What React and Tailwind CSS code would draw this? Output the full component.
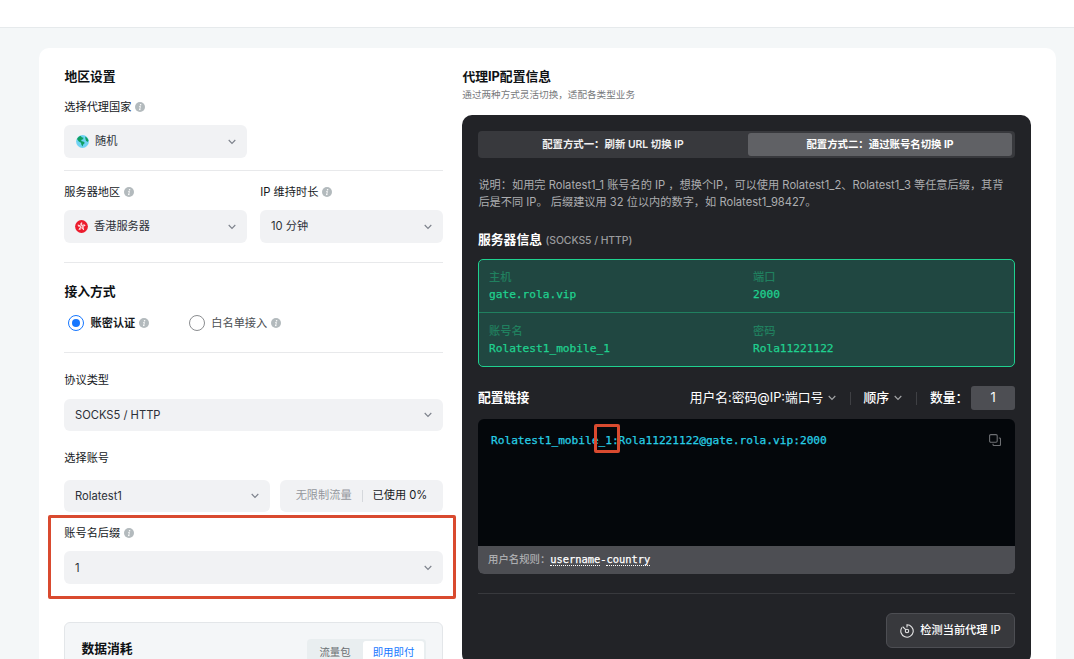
const MONO = "font-['DejaVu_Sans_Mono','Noto_Sans_CJK_SC',monospace] tracking-[-0.02px] [-webkit-text-stroke:0.25px_currentColor]";

function Info() {
  return (
    <svg viewBox="0 0 10 10" className="w-[10px] h-[10px] shrink-0">
      <circle cx="5" cy="5" r="5" fill="#b3babd" />
      <circle cx="5.6" cy="2.7" r="0.8" fill="#fff" />
      <path d="M4.2 4.4h1.2L4.7 7.6M4 7.6h1.5" stroke="#fff" strokeWidth="0.9" fill="none" />
    </svg>
  );
}

function Chevron({ className = "text-[#7d828b]" }) {
  return (
    <svg viewBox="0 0 8 6" className={`w-2 h-[6px] shrink-0 ${className}`} fill="none" stroke="currentColor" strokeWidth="1.1">
      <path d="M0.7 1L4 4.4L7.3 1" />
    </svg>
  );
}

function Globe() {
  return (
    <svg viewBox="0 0 13 13" className="w-[13px] h-[13px] shrink-0 ml-px">
      <circle cx="6.5" cy="6.5" r="6.4" fill="#6fd3f3" />
      <path d="M1 4C1.8 2.2 3 1.2 4.8 0.9L6 2.6L7.4 2.6L7.2 4.2L5.6 4.8L5.2 6L7.8 6.8L8.8 8L7.2 9.4L6.6 11.6L5.4 9.8L5 7.8L2.8 6.6Z" fill="#0f9f61" />
      <path d="M9.2 1.4C10.9 2.2 12 3.6 12.4 5.4L11.6 7L10 5.8L9.4 3.8Z" fill="#0f9f61" />
    </svg>
  );
}

function HongKong() {
  return (
    <svg viewBox="0 0 13 13" className="w-[13px] h-[13px] shrink-0">
      <circle cx="6.5" cy="6.5" r="6.4" fill="#ec1c2d" />
      {[0, 72, 144, 216, 288].map((angle) => (
        <g key={angle} transform={`rotate(${angle} 6.5 6.5)`}>
          <path d="M6.5 6.2C4.7 5.2 5 2.7 7.2 2.3C6.8 3.5 7.9 4.4 6.5 6.2Z" fill="#fff" />
          <path d="M6.3 5.4C5.9 4.6 6 4 6.4 3.5" stroke="#ec1c2d" strokeWidth="0.4" fill="none" />
        </g>
      ))}
    </svg>
  );
}

function Heading({ children, className = "" }) {
  return <h2 className={`h-5 leading-[22px] pl-[0.4px] text-[12.8px] font-bold text-[#0e1114] ${className}`}>{children}</h2>;
}

function Label({ children, info }) {
  return (
    <div className="flex items-center h-5 gap-1 pl-[0.3px] text-[11.2px] text-[#16191d] whitespace-nowrap">
      <span>{children}</span>
      {info && <Info />}
    </div>
  );
}

function Select({ children, icon, className = "h-[33px]" }) {
  return (
    <div className={`flex items-center rounded-md bg-[#f1f2f4] pl-[11px] pr-[11px] text-[11.2px] text-[#2c3038] ${className}`}>
      {icon}
      <span className={icon ? "ml-[6px]" : ""}>{children}</span>
      <span className="ml-auto flex">
        <Chevron />
      </span>
    </div>
  );
}

function Cell({ label, value }) {
  return (
    <div className="w-[264px] shrink-0 pt-[9px] text-[11.2px] leading-[17px]">
      <div className="text-[#20805f] font-medium">{label}</div>
      <div className={`text-[#1fd18f] ${MONO}`}>{value}</div>
    </div>
  );
}

function Settings() {
  return (
    <div className="w-[379px] shrink-0">
      <Heading>地区设置</Heading>
      <div className="mt-[11px]">
        <Label info>选择代理国家</Label>
      </div>
      <Select icon={<Globe />} className="mt-2 h-[33px] w-[183px]">随机</Select>
      <div className="mt-3 h-px bg-[#e8e9eb]" />

      <div className="mt-[11px] flex gap-[13px]">
        <div className="w-[183px]">
          <Label info>服务器地区</Label>
          <Select icon={<HongKong />} className="mt-2 h-[33px]">香港服务器</Select>
        </div>
        <div className="w-[183px]">
          <Label info>IP 维持时长</Label>
          <Select className="mt-2 h-[33px]">10 分钟</Select>
        </div>
      </div>
      <div className="mt-[19px] h-px bg-[#e8e9eb]" />

      <Heading className="mt-[18px]">接入方式</Heading>
      <div className="mt-3 flex items-center h-5 pl-1 text-[11.2px]">
        <span className="w-4 h-4 rounded-full border border-[#1677ff] flex items-center justify-center">
          <span className="w-2 h-2 rounded-full bg-[#1677ff]" />
        </span>
        <span className="ml-[6.5px] mr-1 font-bold text-[#16191d]">账密认证</span>
        <Info />
        <span className="ml-[39.5px] w-4 h-4 rounded-full border border-[#8b8d90]" />
        <span className="ml-[6.5px] mr-1 text-[#4a4d52]">白名单接入</span>
        <Info />
      </div>
      <div className="mt-[19px] h-px bg-[#e8e9eb]" />

      <div className="mt-[17px]">
        <Label>协议类型</Label>
      </div>
      <Select className="mt-[9px] h-8">SOCKS5 / HTTP</Select>

      <div className="mt-[17px]">
        <Label>选择账号</Label>
      </div>
      <div className="mt-3 flex gap-[10px]">
        <Select className="h-8 w-[206px]">Rolatest1</Select>
        <div className="flex-1 h-8 rounded-md bg-[#f1f2f4] flex items-center justify-center text-[11.2px] whitespace-nowrap pb-px">
          <span className="text-[#94979d]">无限制流量</span>
          <span className="mx-[10px] w-px h-3 bg-[#d5d8dc]" />
          <span className="text-[#16191d]">已使用 0%</span>
        </div>
      </div>

      <div className="relative mt-[11px]">
        <Label info>账号名后缀</Label>
        <Select className="mt-2 h-[33px] pt-px">1</Select>
        <div className="absolute -left-4 -top-2 w-[408px] h-[84px] border-3 border-[#d94a2f] rounded-[2px]" />
      </div>

      <div className="mt-[38px] h-[120px] rounded-md border border-[#e3e6e9] bg-[#f4f6f8] pl-4 pr-4 pt-4 flex justify-between">
        <Heading className="-mt-px">数据消耗</Heading>
        <div className="h-[27px] w-[119px] rounded bg-[#e9eef0] p-[2px] flex text-[10.4px] leading-[23px] text-center">
          <span className="w-[54px] pr-[2px] text-[#6a6e72]">流量包</span>
          <span className="flex-1 rounded-[3px] bg-white text-[#1677ff]">即用即付</span>
        </div>
      </div>
    </div>
  );
}

function ProxyInfo() {
  return (
    <div className="w-[569px] ml-[19px] shrink-0">
      <Heading>代理IP配置信息</Heading>
      <p className="h-[18px] leading-[18px] pl-[0.3px] text-[9.6px] text-[#77797c]">通过两种方式灵活切换，适配各类型业务</p>

      <div className="mt-[11px] h-[549px] rounded-[10px] bg-[#222327] p-4">
        <div className="flex h-[27px] rounded bg-[#38393d] p-[2px] pr-[3px] text-[10.4px] leading-[23px] text-center text-white">
          <div className="w-[268px] pr-[2px] font-semibold text-[#f0f0f0]">配置方式一：刷新 URL 切换 IP</div>
          <div className="flex-1 rounded-[3px] bg-[#606165] font-bold">配置方式二：通过账号名切换 IP</div>
        </div>

        <p className="mt-[19px] pl-[0.4px] text-[11.2px] leading-[17px] text-[#acadb0] whitespace-nowrap">
          说明：如用完 Rolatest1_1 账号名的 IP ，想换个IP，可以使用 Rolatest1_2、Rolatest1_3 等任意后缀，其背
          <br />
          后是不同 IP。 后缀建议用 32 位以内的数字，如 Rolatest1_98427。
        </p>

        <div className="mt-[19px] h-5 leading-5 flex items-center gap-1">
          <h3 className="text-[12.8px] font-bold text-white">服务器信息</h3>
          <span className="text-[10.4px] text-[#9a9b9e] -ml-[0.5px] font-medium tracking-[-0.05px] pt-px">(SOCKS5 / HTTP)</span>
        </div>

        <div className="mt-[9px] h-[108px] rounded-[5px] border border-[#1fd18f] bg-[#204741]">
          <div className="h-[53px] flex border-b border-[#20805f] pl-[10px]">
            <Cell label="主机" value="gate.rola.vip" />
            <Cell label="端口" value="2000" />
          </div>
          <div className="h-[53px] flex pl-[10px] pt-px">
            <Cell label="账号名" value="Rolatest1_mobile_1" />
            <Cell label="密码" value="Rola11221122" />
          </div>
        </div>

        <div className="mt-[19px] h-6 flex items-center text-[12.8px] text-white whitespace-nowrap">
          <h3 className="font-bold mr-auto">配置链接</h3>
          <span className="mr-[5px]">用户名:密码@IP:端口号</span>
          <Chevron className="text-[#a5a6a8]" />
          <span className="ml-[14px] mr-3 w-px h-[13px] bg-[#3f4044]" />
          <span className="mr-[5px] font-medium">顺序</span>
          <Chevron className="text-[#a5a6a8]" />
          <span className="ml-[14px] mr-[13px] w-px h-[13px] bg-[#3f4044]" />
          <span className="w-[41px] font-medium">数量：</span>
          <span className="w-11 h-6 leading-6 rounded-[3px] bg-[#4d4e53] text-center">1</span>
        </div>

        <div className="mt-[9px] h-[155px] rounded-md overflow-hidden bg-[#04070b] flex flex-col">
          <div className="flex-1 flex justify-between items-start pl-[13px] pr-[14px] pt-[13px]">
            <div className={`relative text-[11.2px] leading-[17px] text-[#27cfe6] ${MONO}`}>
              Rolatest1_mobile_1:Rola11221122@gate.rola.vip:2000
              <div className="absolute left-[103px] -top-2 w-[26px] h-[29px] border-3 border-[#d94a2f] rounded-[2px]" />
            </div>
            <svg viewBox="0 0 12 12" className="w-3 h-3 mt-[2px]" fill="none" stroke="#6d6f73" strokeWidth="1.1">
              <rect x="0.6" y="0.6" width="7.6" height="7.6" rx="1.2" />
              <path d="M9.8 4h0.7a1 1 0 0 1 1 1v5.5a1 1 0 0 1-1 1H5a1 1 0 0 1-1-1V9.8" />
            </svg>
          </div>
          <div className="h-7 bg-[#4d4e53] flex items-center pl-[10px] text-[10.4px] font-medium text-[#acadb0]">
            <span>用户名规则：</span>
            <span className={`flex leading-[11px] text-white ${MONO}`}>
              <span className="border-b border-dotted border-white">username</span>-
              <span className="border-b border-dotted border-white">country</span>
            </span>
          </div>
        </div>

        <div className="mt-[19px] h-px bg-[#38393d]" />
        <div className="mt-[19px] flex justify-end">
          <button className="w-[129px] h-[35px] rounded-md border border-[#4d4e53] bg-[#38393d] flex items-center justify-center gap-[6px] text-[11.2px] font-medium text-white">
            <svg viewBox="0 0 14 14" className="w-[14px] h-[14px]" fill="none" stroke="#e4e4e5" strokeWidth="1.1" strokeLinecap="round">
              <path d="M7 3V0.8A6.2 6.2 0 1 1 1.7 3.8" />
              <circle cx="7" cy="7" r="1.7" />
              <path d="M5.7 5.7L3 3" />
            </svg>
            检测当前代理 IP
          </button>
        </div>
      </div>
    </div>
  );
}

export default function App() {
  return (
    <div className="h-[659px] overflow-hidden bg-[#f4f7f8] font-['Inter','Noto_Sans_CJK_SC',sans-serif]">
      <header className="h-7 bg-white border-b border-[#e6eaec]" />
      <main className="mt-5 ml-[39px] w-[1017px] h-[700px] rounded-[10px] bg-white pl-[25px] pt-[18px] flex">
        <Settings />
        <ProxyInfo />
      </main>
    </div>
  );
}
